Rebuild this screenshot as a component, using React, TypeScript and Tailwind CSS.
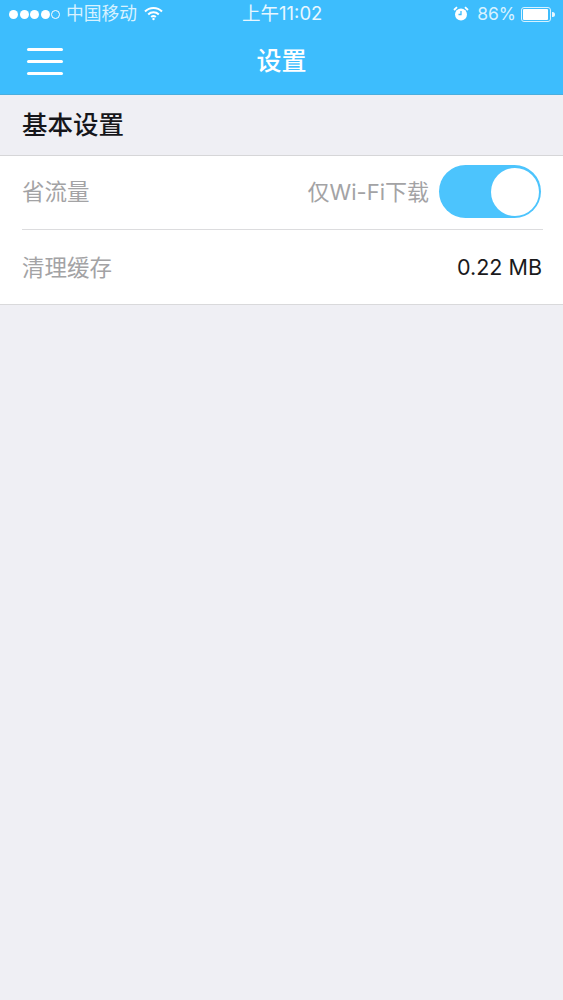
export default function App() {
  return (
    <div className="w-[563px] h-[1000px] bg-[#efeff4] flex flex-col overflow-hidden font-['Inter','Noto_Sans_CJK_SC',sans-serif]">
      <header className="h-[95px] bg-[#3dbdfd] border-b border-[#4aaede] flex flex-col text-white">
        <div className="h-[28px] flex items-center justify-between pl-[9px] pr-[8px] relative">
          <div className="flex items-center">
            <div className="flex items-center gap-[1.5px]">
              <span className="w-[9px] h-[9px] rounded-full bg-white" />
              <span className="w-[9px] h-[9px] rounded-full bg-white" />
              <span className="w-[9px] h-[9px] rounded-full bg-white" />
              <span className="w-[9px] h-[9px] rounded-full bg-white" />
              <span className="w-[9px] h-[9px] rounded-full border border-white" />
            </div>
            <span className="ml-[6px] text-[17.75px] leading-none text-[#d8f2ff]">中国移动</span>
            <svg className="ml-[7px] -mt-[2px]" width="19" height="15" viewBox="0 0 19 15" fill="none" stroke="white" strokeWidth="2">
              <path d="M1 5.5 A12 12 0 0 1 18 5.5" />
              <path d="M4.2 8.5 A7.5 7.5 0 0 1 14.8 8.5" />
              <path d="M7.2 11 A3.4 3.4 0 0 1 11.8 11" />
              <circle cx="9.5" cy="13" r="1.2" fill="white" stroke="none" />
            </svg>
          </div>
          <span className="absolute left-[242px] top-[4px] text-[18.5px] leading-[18px] text-[#e8f7ff]">上午11:02</span>
          <div className="flex items-center">
            <svg width="16" height="16" viewBox="0 0 16 16">
              <circle cx="8" cy="8.5" r="6" fill="white" />
              <path d="M8 5 V8.5 H5.5" fill="none" stroke="#3dbdfd" strokeWidth="1.3" />
              <path d="M1 4 L4 1.2 M15 4 L12 1.2" stroke="white" strokeWidth="1.8" />
            </svg>
            <span className="ml-[8px] text-[17.5px] leading-none text-[#d8f2ff]">86%</span>
            <div className="ml-[5px] w-[30px] h-[15px] border border-[#d8f2ff] rounded-[3px] p-[1px]">
              <div className="w-[25px] h-full bg-white rounded-[1px]" />
            </div>
            <div className="ml-[1px] w-[3px] h-[5px] bg-[#e8f7ff] rounded-r-sm" />
          </div>
        </div>
        <div className="relative flex-1 flex items-center justify-center">
          <div className="absolute left-[27px] top-[20px] w-[36px] flex flex-col gap-[9px]">
            <span className="h-[3px] bg-white rounded-full" />
            <span className="h-[3px] bg-white rounded-full" />
            <span className="h-[3px] bg-white rounded-full" />
          </div>
          <span className="text-[25px] leading-none font-medium">设置</span>
        </div>
      </header>
      <div className="h-[61px] flex items-center pl-[22px] text-[25.5px] font-medium text-[#16161a] border-b border-[#d6d6d8]">基本设置</div>
      <section className="bg-white border-b border-[#d9d9db]">
        <div className="ml-[22px] mr-[20px] h-[74px] pb-[2px] border-b border-[#dcdcde] flex items-center justify-between">
          <span className="mt-[1px] text-[22.5px] text-[#a3a3a5]">省流量</span>
          <div className="flex items-center mr-[2px]">
            <span className="mt-[1px] text-[22px] text-[#a3a3a5] mr-[10px]">仅Wi-Fi下载</span>
            <div className="w-[102px] h-[53px] rounded-full bg-[#4cc4fd] flex justify-end items-center p-[2px]">
              <span className="w-[48px] h-[48px] rounded-full bg-white" />
            </div>
          </div>
        </div>
        <div className="ml-[22px] mr-[21px] h-[74px] pt-[1px] flex items-center justify-between">
          <span className="text-[22.5px] text-[#a3a3a5]">清理缓存</span>
          <span className="text-[21.5px] text-[#1a1a1c]">0.22 MB</span>
        </div>
      </section>
    </div>
  );
}
